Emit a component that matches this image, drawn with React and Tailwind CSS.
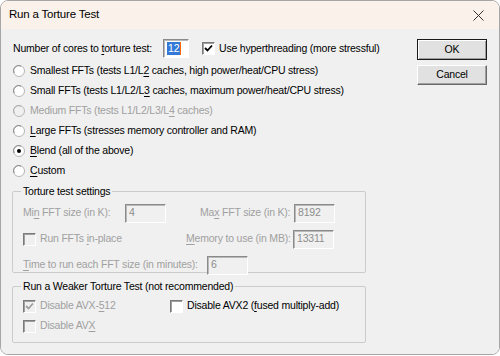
import React from "react";

const font = { fontFamily: '"Liberation Sans", Arial, sans-serif' };

function U({ children }) {
  return <span className="underline underline-offset-[2px] decoration-1">{children}</span>;
}

function Radio({ checked, disabled }) {
  return (
    <svg width="12" height="12" viewBox="0 0 12 12" className="shrink-0">
      <circle cx="6" cy="6" r="5.5" fill={disabled ? "#f0f0f0" : "#ffffff"} stroke="#b5b5b5" />
      <path d="M1.2 8 A5 5 0 0 1 8 1.2" fill="none" stroke={disabled ? "#b0b0b0" : "#8a8a8a"} strokeWidth="1" />
      {checked && <circle cx="6" cy="6" r="2" fill="#000" />}
    </svg>
  );
}

function Check({ checked, disabled }) {
  return (
    <span
      className={`w-[13px] h-[13px] shrink-0 flex items-center justify-center border border-t-[#7a7a7a] border-l-[#7a7a7a] border-b-white border-r-white shadow-[inset_1px_1px_0_#a0a0a0] ${
        disabled ? "bg-[#f0f0f0]" : "bg-white"
      }`}
    >
      {checked && (
        <svg width="9" height="9" viewBox="0 0 9 9">
          <path d="M1 4 L3.5 6.5 L8 1.5" fill="none" stroke={disabled ? "#a0a0a0" : "#000"} strokeWidth="1.8" />
        </svg>
      )}
    </span>
  );
}

function Edit({ value, w, disabled, selected }) {
  return (
    <span
      className={`h-[19px] shrink-0 flex items-center pl-[3px] border border-t-[#8a8a8a] border-l-[#8a8a8a] border-b-white border-r-white shadow-[inset_1px_1px_0_#b9b9b9] ${
        disabled ? "bg-[#f0f0f0] text-[#8d8d8d]" : "bg-white text-black"
      } ${w}`}
    >
      {selected ? (
        <span className="bg-[#3479d8] text-white px-[1px] border-r border-[#ff6a00] leading-[13px]">{value}</span>
      ) : (
        value
      )}
    </span>
  );
}

function RadioRow({ children, checked, disabled }) {
  return (
    <div className={`h-[20px] flex items-center gap-[5px] pl-[1px] ${disabled ? "text-[#a0a0a0]" : "text-black"}`}>
      <Radio checked={checked} disabled={disabled} />
      <span>{children}</span>
    </div>
  );
}

function Button({ children, def }) {
  return (
    <div
      className={`w-[70px] flex items-center justify-center bg-[#e1e1e1] text-black ${
        def
          ? "h-[21px] border border-[#1a1a1a] shadow-[inset_1px_1px_0_#fff,inset_-1px_-1px_0_#a0a0a0]"
          : "h-[20px] border border-t-white border-l-white border-b-[#696969] border-r-[#696969] shadow-[inset_-1px_-1px_0_#a0a0a0]"
      }`}
    >
      {children}
    </div>
  );
}

export default function App() {
  return (
    <div className="w-[500px] h-[356px] bg-white" style={font}>
      <div className="w-[500px] h-[355px] flex flex-col border border-[#a6a6a6] rounded-[8px] overflow-hidden">
        <div className="h-[28px] shrink-0 bg-[#faf1eb] flex items-center justify-between pl-[8px] pr-[15px]">
          <span className="text-[11.5px] tracking-[-0.2px] text-black">Run a Torture Test</span>
          <svg width="11" height="11" viewBox="0 0 11 11">
            <path d="M0.5 0.5 L10.5 10.5 M10.5 0.5 L0.5 10.5" stroke="#333" strokeWidth="1" />
          </svg>
        </div>

        <div className="flex-1 bg-[#f0f0f0] flex pl-[11px] pr-[12px] pt-[10px] text-[10.5px] tracking-[-0.2px] whitespace-nowrap">
          <div className="w-[354px] shrink-0 flex flex-col">
            <div className="h-[19px] flex items-center">
              <span className="w-[151px] shrink-0 pl-[1px]">
                Number of cores to <U>t</U>orture test:
              </span>
              <Edit value="12" w="w-[26px]" selected />
              <span className="ml-[13px] shrink-0">
                <Check checked />
              </span>
              <span className="ml-[4px] shrink-0">Use hyperthreading (more stressful)</span>
            </div>

            <div className="flex flex-col mt-[3px]">
              <RadioRow>
                Smallest FFTs (tests L1/L<U>2</U> caches, high power/heat/CPU stress)
              </RadioRow>
              <RadioRow>
                Small FFTs (tests L1/L2/L<U>3</U> caches, maximum power/heat/CPU stress)
              </RadioRow>
              <RadioRow disabled>
                Medium FFTs (tests L1/L2/L3/L<U>4</U> caches)
              </RadioRow>
              <RadioRow>
                <U>L</U>arge FFTs (stresses memory controller and RAM)
              </RadioRow>
              <RadioRow checked>
                <U>B</U>lend (all of the above)
              </RadioRow>
              <RadioRow>
                <U>C</U>ustom
              </RadioRow>
            </div>

            <fieldset className="mt-[3px] h-[89px] border border-[#cbcbcb] rounded-[2px] px-[10px] pt-[2px] text-[#a0a0a0]">
              <legend className="ml-[-2px] px-[2px] text-black leading-[14px]">Torture test settings</legend>
              <div className="h-[26px] flex items-center">
                <span className="w-[102px] shrink-0">
                  Mi<U>n</U> FFT size (in K):
                </span>
                <Edit value="4" w="w-[41px]" disabled />
                <span className="ml-[34px] w-[94px] shrink-0">
                  Ma<U>x</U> FFT size (in K):
                </span>
                <Edit value="8192" w="w-[41px]" disabled />
              </div>
              <div className="h-[26px] flex items-center">
                <Check disabled />
                <span className="ml-[4px] w-[146px] shrink-0">
                  Run FFTs <U>i</U>n-place
                </span>
                <span className="w-[107px] shrink-0">
                  <U>M</U>emory to use (in MB):
                </span>
                <Edit value="13311" w="w-[41px]" disabled />
              </div>
              <div className="h-[26px] flex items-center">
                <span className="w-[184px] shrink-0">
                  <U>T</U>ime to run each FFT size (in minutes):
                </span>
                <Edit value="6" w="w-[41px]" disabled />
              </div>
            </fieldset>

            <fieldset className="mt-[6px] h-[64px] border border-[#cbcbcb] rounded-[2px] px-[10px] pt-[3px]">
              <legend className="ml-[-2px] px-[2px] text-black leading-[14px]">
                Run a Weaker Torture Test (not recommended)
              </legend>
              <div className="h-[20px] flex items-center">
                <Check checked disabled />
                <span className="ml-[4px] w-[130px] shrink-0 text-[#a0a0a0]">
                  Disable AVX-<U>5</U>12
                </span>
                <Check />
                <span className="ml-[4px]">
                  Disable AVX2 (<U>f</U>used multiply-add)
                </span>
              </div>
              <div className="h-[20px] flex items-center text-[#a0a0a0]">
                <Check disabled />
                <span className="ml-[4px]">
                  Disable AV<U>X</U>
                </span>
              </div>
            </fieldset>
          </div>

          <div className="ml-auto flex flex-col gap-[5px]">
            <Button def>OK</Button>
            <Button>Cancel</Button>
          </div>
        </div>
      </div>
    </div>
  );
}
